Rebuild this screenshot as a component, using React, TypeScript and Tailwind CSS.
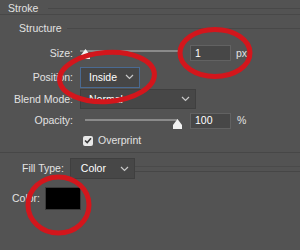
import React from 'react';

const Chevron = () => (
  <svg width="9" height="6" viewBox="0 0 9 6" className="ml-auto mr-[5px]">
    <path d="M1 1 L4.5 4.5 L8 1" fill="none" stroke="#c9c9c9" strokeWidth="1.2" />
  </svg>
);

const Thumb = () => (
  <svg width="9" height="10" viewBox="0 0 9 10">
    <path d="M4.5 0 L9 6 L9 10 L0 10 L0 6 Z" fill="#f2f2f2" />
  </svg>
);

const Slider: React.FC<{ at: 'start' | 'end'; trackLeft: number }> = ({ at, trackLeft }) => (
  <div className="relative w-[98px] h-[16px]">
    <div
      className="absolute top-[5px] right-0 h-[2px] bg-[#8a8a8a]"
      style={{ left: trackLeft }}
    />
    <div className={at === 'start' ? 'absolute top-[4px] left-[1px]' : 'absolute top-[5px] right-[-4px]'}>
      <Thumb />
    </div>
  </div>
);

const NumberBox: React.FC<{ value: string }> = ({ value }) => (
  <div className="w-[41px] h-[16px] border border-[#626262] bg-[#474747] flex items-center pl-[4px] text-white">
    {value}
  </div>
);

const Row: React.FC<{ label: string; h: string; children: React.ReactNode }> = ({ label, h, children }) => (
  <div className={`flex items-center ${h}`}>
    <div className="w-[73px] text-right">{label}</div>
    <div className="ml-[7px] flex items-center">{children}</div>
  </div>
);

export default function App() {
  return (
    <div
      className="relative w-[300px] h-[250px] overflow-hidden bg-[#535353] text-[10.5px] text-[#e2e2e2] leading-none"
      style={{ fontFamily: '"Liberation Sans", Arial, sans-serif' }}
    >
      {/* header */}
      <div className="flex items-center h-[15px] pt-[3px] pl-[8px] border-b border-[#484848]">
        <span>Stroke</span>
        <div className="flex-1 h-px bg-[#484848] ml-[10px]" />
      </div>
      <div className="flex items-center h-[26px] pl-[19px]">
        <span>Structure</span>
        <div className="flex-1 h-px bg-[#484848] ml-[5px]" />
      </div>

      <Row label="Size:" h="h-[24px]">
        <Slider at="start" trackLeft={0} />
        <div className="ml-[12px]">
          <NumberBox value="1" />
        </div>
        <span className="ml-[5px]">px</span>
      </Row>

      <Row label="Position:" h="h-[24px]">
        <div className="w-[60px] h-[21px] border border-[#4a6a92] bg-[#464646] flex items-center pl-[8px] text-white">
          Inside
          <Chevron />
        </div>
      </Row>

      <Row label="Blend Mode:" h="h-[20px]">
        <div className="w-[116px] h-[20px] border border-[#3f3f3f] bg-[#474747] flex items-center pl-[8px] text-white">
          Normal
          <Chevron />
        </div>
      </Row>

      <Row label="Opacity:" h="h-[23px]">
        <div className="pt-[2px]">
          <Slider at="end" trackLeft={5} />
        </div>
        <div className="ml-[12px]">
          <NumberBox value="100" />
        </div>
        <span className="ml-[6px]">%</span>
      </Row>

      <div className="flex items-center h-[17px] pl-[83px]">
        <div className="w-[10px] h-[10px] rounded-[2px] bg-[#e8e8e8] flex items-center justify-center">
          <svg width="8" height="7" viewBox="0 0 8 7">
            <path d="M1 3.5 L3.2 5.6 L7 1.2" fill="none" stroke="#3a3a3a" strokeWidth="1.6" />
          </svg>
        </div>
        <span className="ml-[5px]">Overprint</span>
      </div>

      <div className="mt-[3px] h-px bg-[#474747]" />

      <div className="flex items-center mt-[5px] h-[21px]">
        <span className="pl-[22px]">Fill Type:</span>
        <div className="ml-[6px] w-[65px] h-[21px] border border-[#3f3f3f] bg-[#474747] flex items-center pl-[10px] text-white">
          Color
          <Chevron />
        </div>
        <div className="flex-1 flex flex-col gap-[4px] pt-[8px] self-start">
          <div className="h-px bg-[#4a4a4a]" />
          <div className="h-px bg-[#464646]" />
        </div>
      </div>

      <div className="flex items-center mt-[8px] h-[23px]">
        <span className="pl-[12px]">Color:</span>
        <div className="ml-[5px] w-[36px] h-[23px] bg-black border border-[#3a3a3a]" />
      </div>

      {/* red annotation marks */}
      <svg className="absolute inset-0" width="300" height="250" viewBox="0 0 300 250">
        <g fill="none" stroke="#d3161c" strokeWidth="5">
          <ellipse cx="215" cy="53" rx="35" ry="23.5" />
          <ellipse cx="107" cy="77" rx="47.5" ry="24.5" transform="rotate(-4 107 77)" />
          <ellipse cx="58.5" cy="205" rx="30.5" ry="28" />
        </g>
      </svg>
    </div>
  );
}
